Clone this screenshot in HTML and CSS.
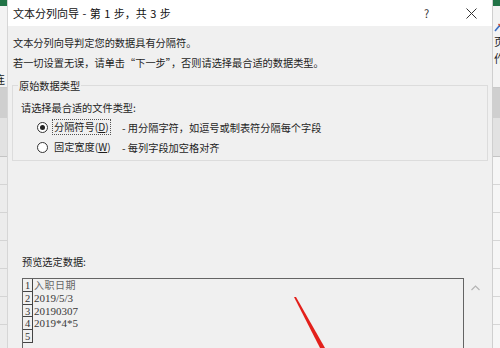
FILE: index.html
```html
<!DOCTYPE html>
<html>
<head>
<meta charset="utf-8">
<link rel="stylesheet" href="styles.css">
</head>
<body>
<div class="screen">
    <div class="excel left">
        <div class="ribbon"></div>
        <div class="tools"><span class="cut-char">连</span></div>
        <div class="band"></div>
        <div class="cells"></div>
    </div>

    <div class="dialog">
        <div class="titlebar">
            <span class="title">文本分列向导 - 第 1 步，共 3 步</span>
            <span class="help">?</span>
            <span class="close">
                <svg width="11" height="11" viewBox="0 0 11 11"><path d="M0.5 0.5 L10.5 10.5 M10.5 0.5 L0.5 10.5" stroke="#333" stroke-width="1"/></svg>
            </span>
        </div>
        <div class="content">
            <p class="line">文本分列向导判定您的数据具有分隔符。</p>
            <p class="line">若一切设置无误，请单击“下一步”，否则请选择最合适的数据类型。</p>

            <fieldset class="group">
                <legend>原始数据类型</legend>
                <div class="hint">请选择最合适的文件类型:</div>
                <div class="radio-row">
                    <span class="radio checked"></span>
                    <span class="label-box"><span class="label focus">分隔符号(<u>D</u>)</span></span>
                    <span class="desc">- 用分隔字符，如逗号或制表符分隔每个字段</span>
                </div>
                <div class="radio-row">
                    <span class="radio"></span>
                    <span class="label-box"><span class="label">固定宽度(<u>W</u>)</span></span>
                    <span class="desc">- 每列字段加空格对齐</span>
                </div>
            </fieldset>

            <div class="preview-label">预览选定数据:</div>
            <div class="preview-wrap">
                <div class="preview">
                    <div class="prow"><span class="num">1</span><span class="cell head">入职日期</span></div>
                    <div class="prow"><span class="num">2</span><span class="cell">2019/5/3</span></div>
                    <div class="prow"><span class="num">3</span><span class="cell">20190307</span></div>
                    <div class="prow"><span class="num">4</span><span class="cell">2019*4*5</span></div>
                    <div class="prow"><span class="num">5</span><span class="cell"></span></div>
                </div>
                <div class="scroll">
                    <svg width="9" height="6" viewBox="0 0 9 6"><path d="M0.5 5 L4.5 1 L8.5 5" stroke="#b4b4b4" stroke-width="1.2" fill="none"/></svg>
                </div>
            </div>
        </div>
    </div>

    <div class="excel right">
        <div class="ribbon"></div>
        <div class="tools">
            <svg class="pen" width="7" height="9" viewBox="0 0 7 9"><path d="M1 8 L6 2" stroke="#3b6fc4" stroke-width="1.6"/><path d="M4.5 1 L6.5 3" stroke="#d04a2a" stroke-width="1.4"/></svg>
            <span class="cut-char">页</span>
            <span class="cut-char">作</span>
        </div>
        <div class="band"></div>
        <div class="cells"></div>
    </div>

    <svg class="arrow" width="500" height="348" viewBox="0 0 500 348">
        <polygon points="294,297 296,297 325,348 320,348" fill="#e3201b"/>
    </svg>
</div>
</body>
</html>
```

FILE: styles.css
```css
html, body {
    margin: 0;
    padding: 0;
}
body {
    width: 500px;
    height: 348px;
    overflow: hidden;
    font-family: "Noto Sans CJK SC", "Noto Sans", sans-serif;
    color: #1e1e1e;
}
.screen {
    display: flex;
    width: 500px;
    height: 348px;
    position: relative;
    background: #f3f3f3;
}

/* excel behind the dialog */
.excel {
    width: 7px;
    flex: none;
    display: flex;
    flex-direction: column;
    overflow: hidden;
    background: #f7f7f7;
}
.excel .ribbon {
    height: 6px;
    background: #217346;
    flex: none;
}
.excel .tools {
    height: 82px;
    background: #f3f3f3;
    flex: none;
    font-size: 11px;
    line-height: 14px;
    color: #222;
    box-sizing: border-box;
    border-bottom: 1px solid #c9c9c9;
}
.excel.left .tools {
    padding-top: 66px;
}
.excel.left .cut-char {
    display: block;
    margin-left: -6px;
}
.excel.right .tools {
    padding-top: 17px;
}
.excel.right .pen {
    display: block;
    margin-left: 1px;
}
.excel.right .cut-char {
    display: block;
    margin-left: 1px;
    line-height: 15px;
    margin-top: 2px;
}
.excel .band {
    height: 68px;
    flex: none;
    background: linear-gradient(#cfcfcf 0 30px, #e2e2e2 30px);
    border-bottom: 1px solid #c4c4c4;
}
.excel .cells {
    flex: 1;
    background: repeating-linear-gradient(#f6f6f6 0 27px, #d6d6d6 27px 28px);
}
.excel.left .cells {
    background: repeating-linear-gradient(#ececec 0 27px, #d4d4d4 27px 28px);
}

/* dialog */
.dialog {
    width: 486px;
    flex: none;
    background: #f0f0f0;
    border-left: 1px solid #d6d6d6;
    border-right: 1px solid #cfcfcf;
    box-sizing: border-box;
}
.titlebar {
    height: 26px;
    background: #ffffff;
    display: flex;
    align-items: center;
    padding-left: 5px;
    font-size: 11px;
}
.title {
    flex: 1;
    color: #111;
    word-spacing: 1px;
}
.help {
    width: 12px;
    font-size: 11px;
    color: #333;
    margin-right: 30px;
}
.close {
    width: 11px;
    height: 11px;
    margin-right: 15px;
    display: flex;
}

.content {
    padding: 7px 6px 0 5px;
    font-size: 10.2px;
}
.line {
    margin: 0;
    line-height: 20px;
}

.group {
    margin: 4px 0 0 -1px;
    width: 476px;
    box-sizing: border-box;
    border: 1px solid #dcdcdc;
    padding: 7px 0 3px 8px;
}
.group legend {
    padding: 2px 1px 0 1px;
    margin-left: -3px;
    line-height: 14px;
}
.hint {
    line-height: 16px;
    margin-bottom: 1px;
}
.radio-row {
    display: flex;
    align-items: center;
    height: 20px;
    padding-left: 16px;
    white-space: nowrap;
}
.radio {
    width: 9px;
    height: 9px;
    flex: none;
    border: 1px solid #333;
    border-radius: 50%;
    background: #fff;
    display: flex;
    align-items: center;
    justify-content: center;
    margin-right: 4px;
}
.radio.checked::after {
    content: "";
    width: 5px;
    height: 5px;
    border-radius: 50%;
    background: #222;
}
.label-box {
    width: 70px;
    flex: none;
}
.label {
    display: inline-block;
    padding: 0 1px;
    line-height: 14px;
    border: 1px dotted transparent;
}
.label.focus {
    border-color: #555;
}
.desc {
    margin-left: 0;
}

.preview-label {
    margin-top: 93px;
    margin-left: 9px;
    line-height: 16px;
}
.preview-wrap {
    display: flex;
    margin-top: 8px;
    margin-left: 9px;
}
.preview {
    width: 442px;
    height: 80px;
    border: 1px solid #646464;
    border-bottom: none;
    box-sizing: border-box;
    font-family: "Liberation Serif", "Noto Sans CJK SC", serif;
    font-size: 11px;
}
.prow {
    display: flex;
    height: 12.75px;
    line-height: 13px;
}
.num {
    width: 10px;
    flex: none;
    text-align: center;
    border-right: 1px solid #444;
    border-bottom: 1px solid #444;
    box-sizing: border-box;
    font-size: 10.5px;
    color: #333;
}
.cell {
    padding-left: 1px;
    color: #3a3a3a;
}
.cell.head {
    color: #666;
    letter-spacing: 0.5px;
    font-size: 10px;
}
.scroll {
    width: 22px;
    display: flex;
    justify-content: center;
    padding-top: 7px;
}

.arrow {
    position: absolute;
    left: 0;
    top: 0;
    pointer-events: none;
}
```
